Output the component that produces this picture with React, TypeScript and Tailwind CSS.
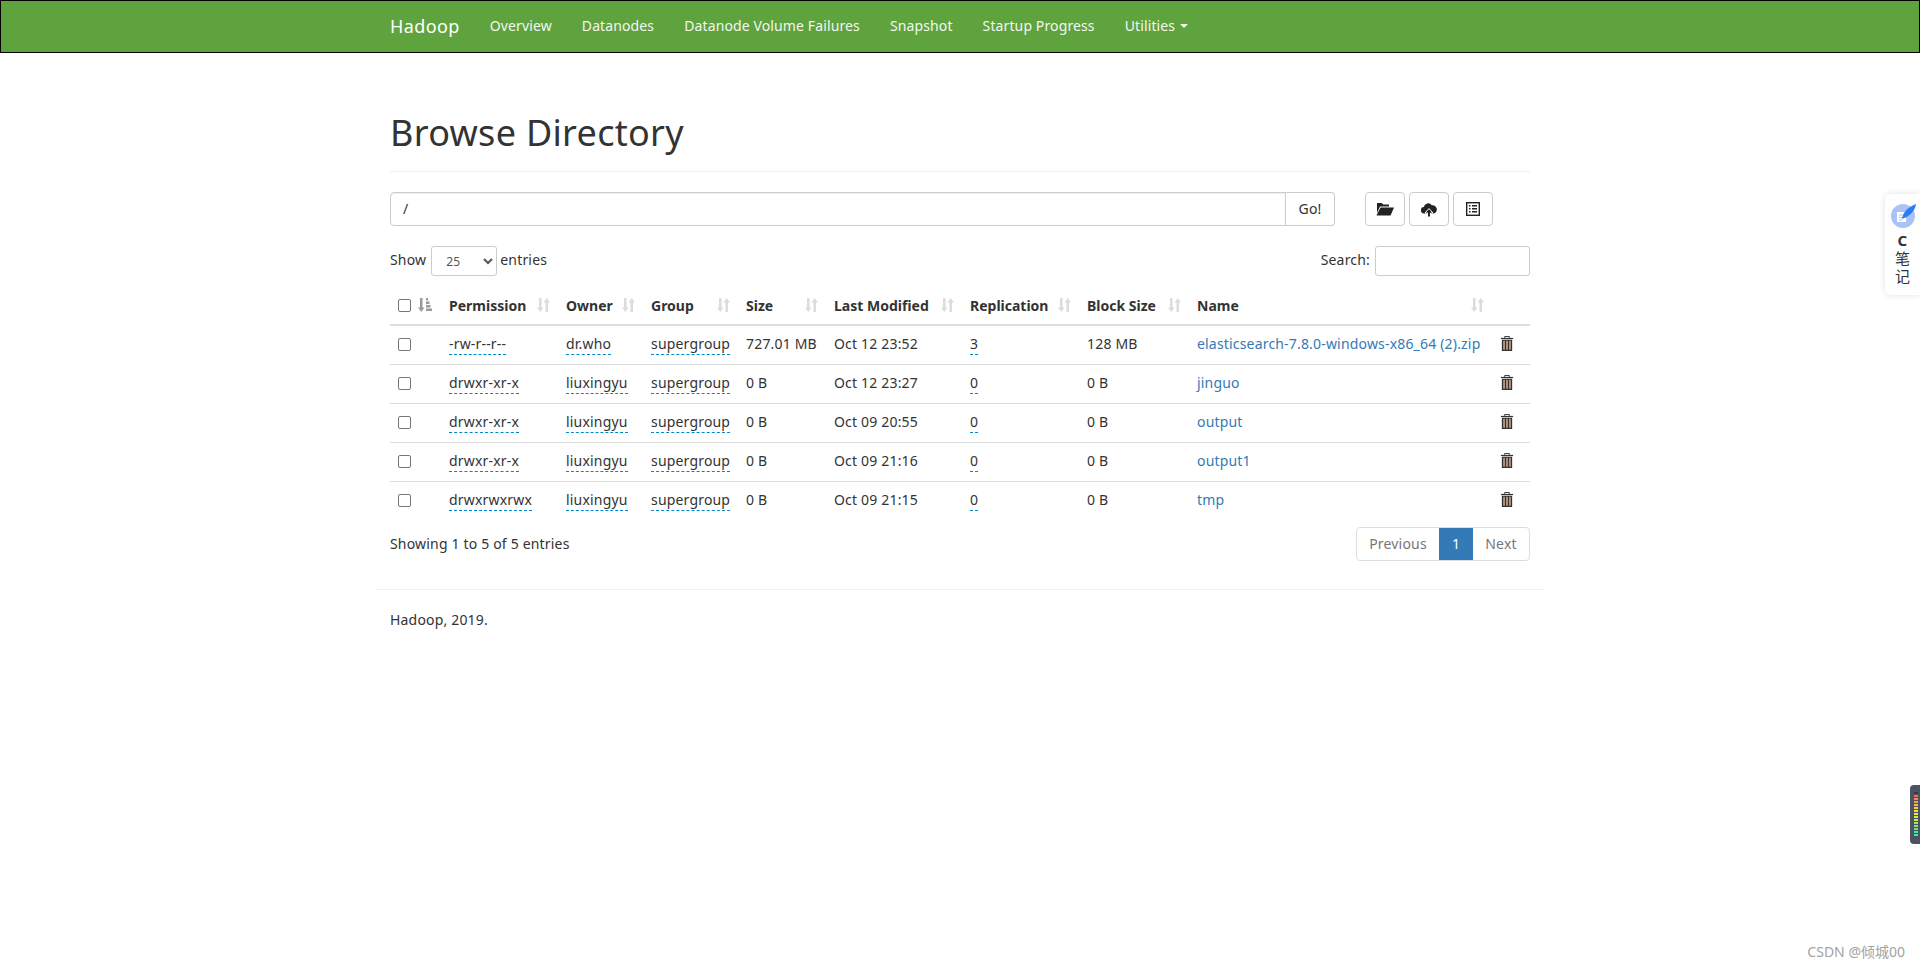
const ROWS = [
  { perm: "-rw-r--r--", owner: "dr.who", group: "supergroup", size: "727.01 MB", date: "Oct 12 23:52", rep: "3", block: "128 MB", name: "elasticsearch-7.8.0-windows-x86_64 (2).zip" },
  { perm: "drwxr-xr-x", owner: "liuxingyu", group: "supergroup", size: "0 B", date: "Oct 12 23:27", rep: "0", block: "0 B", name: "jinguo" },
  { perm: "drwxr-xr-x", owner: "liuxingyu", group: "supergroup", size: "0 B", date: "Oct 09 20:55", rep: "0", block: "0 B", name: "output" },
  { perm: "drwxr-xr-x", owner: "liuxingyu", group: "supergroup", size: "0 B", date: "Oct 09 21:16", rep: "0", block: "0 B", name: "output1" },
  { perm: "drwxrwxrwx", owner: "liuxingyu", group: "supergroup", size: "0 B", date: "Oct 09 21:15", rep: "0", block: "0 B", name: "tmp" },
];

const COLUMNS = [
  { label: "Permission", width: "w-[117px]" },
  { label: "Owner", width: "w-[85px]" },
  { label: "Group", width: "w-[95px]" },
  { label: "Size", width: "w-[88px]" },
  { label: "Last Modified", width: "w-[136px]" },
  { label: "Replication", width: "w-[117px]" },
  { label: "Block Size", width: "w-[110px]" },
  { label: "Name", width: "w-[303px]" },
];

const NAV = ["Overview", "Datanodes", "Datanode Volume Failures", "Snapshot", "Startup Progress"];

const METER = ["#3a3a3a", "#f26a6a", "#f5875c", "#f7a14e", "#f9b846", "#fbd03f", "#f7e03a", "#ece63b", "#dce840", "#c4e74e", "#a5e560", "#85e475", "#62e38e", "#48e3a8", "#3fe3bd"];

const SortIcon = () => (
  <svg viewBox="0 0 13 14" className="h-[14px] w-[13px] shrink-0 fill-[#dcdcdc]">
    <path d="M2 0h2.500v9.500H6.500L3.250 14 0 9.500H2z" />
    <path d="M8.500 14V4.500H6.500L9.750 0 13 4.500H11V14z" />
  </svg>
);

const SortActive = () => (
  <svg viewBox="0 0 14 14" className="h-[14px] w-[14px] fill-[#9a9a9a]">
    <path d="M2 0h2.500v9.500H6.500L3.250 14 0 9.500H2z" />
    <path d="M8 0h2v2.500H8zM8 3.500h3.500V6H8zM8 7h4.500v2.500H8zM8 10.500h6V13H8z" />
  </svg>
);

const TrashIcon = () => (
  <svg viewBox="0 0 14 16" className="h-[15px] w-[14px]">
    <path d="M4.500 2V.5h5V2" fill="none" stroke="#333" strokeWidth="1" />
    <path d="M.5 2h13v1.300H.5z" fill="#333" />
    <path d="M1.500 4h11v12h-11z" fill="#333" />
    <path d="M3 5h1.700v9.700H3zM6.150 5h1.700v9.700h-1.700zM9.300 5H11v9.700H9.300z" fill="#c9a68f" />
  </svg>
);

const FolderOpenIcon = () => (
  <svg viewBox="0 0 18 14" className="h-[14px] w-[18px] fill-[#222]">
    <path d="M1 1h5l1 1.500h6V4.500H4L1 11z" />
    <path d="M4.500 5.500H18L14.500 13.500H0.500z" />
  </svg>
);

const CloudUploadIcon = () => (
  <svg viewBox="0 0 16 15" className="h-[15px] w-[16px] fill-[#222]">
    <path d="M3.500 11.500A3.200 3.200 0 0 1 2.800 5 4.400 4.400 0 0 1 10.800 3.300 3.800 3.800 0 0 1 12.500 11.500z" />
    <path d="M8 6.500l4 4.500H9.500V15H6.500v-4H4z" stroke="#fff" strokeWidth="1" />
  </svg>
);

const ListAltIcon = () => (
  <svg viewBox="0 0 14 14" className="h-[14px] w-[14px]">
    <rect x="0.700" y="0.700" width="12.600" height="12.600" fill="#fff" stroke="#222" strokeWidth="1.400" />
    <path d="M3 3h1.500v1.500H3zM6 3h5v1.500H6zM3 6h1.500v1.500H3zM6 6h5v1.500H6zM3 9h1.500v1.500H3zM6 9h5v1.500H6z" fill="#222" />
  </svg>
);

const Dashed = ({ children }: { children: string }) => (
  <span className="border-b border-dashed border-[#0088cc] pb-px">{children}</span>
);

const Checkbox = () => (
  <input type="checkbox" className="m-0 block h-[13px] w-[13px] appearance-none rounded-[2px] border border-[#767676] bg-white" />
);

const IconButton = ({ children }: { children: React.ReactNode }) => (
  <button className="flex h-[34px] w-[40px] items-center justify-center rounded border border-[#ccc] bg-white">{children}</button>
);

const NoteWidget = () => (
  <div className="absolute right-0 top-[194px] flex h-[101px] w-[35px] flex-col items-center rounded-l-md bg-white pt-[10px] shadow-[0_0_6px_rgba(0,0,0,0.12)]">
    <svg viewBox="0 0 24 24" className="h-6 w-6 overflow-visible">
      <circle cx="12" cy="12" r="12" fill="#a9c3f7" />
      <path d="M6 8h9v10H6z" fill="#fff" />
      <path d="M8 11h5M8 13.500h5M8 16h3" stroke="#a9c3f7" strokeWidth="1" />
      <path d="M11 15C12 8 17 3 25 0c-1 7-6 12-14 15z" fill="#2b7bf5" />
    </svg>
    <div className="mt-[3px] text-center text-[15px] font-bold leading-[18px] text-[#333]">C</div>
    <div className="text-center text-[15px] leading-[18px] text-[#333]">笔</div>
    <div className="text-center text-[15px] leading-[18px] text-[#333]">记</div>
  </div>
);

const MeterWidget = () => (
  <div className="absolute right-0 top-[785px] flex h-[59px] w-[10px] flex-col items-end gap-px rounded-l bg-[#4d5261] pr-[2px] pt-[7px]">
    {METER.map((c, i) => (
      <div key={i} className="h-[2px] w-[4px]" style={{ backgroundColor: c }} />
    ))}
  </div>
);

export default function App() {
  return (
    <div className="relative min-h-[969px] overflow-hidden bg-white font-['Noto_Sans','Noto_Sans_CJK_SC',sans-serif] text-[14px] leading-5 tracking-[0.18px] text-[#333]">
      <nav className="h-[53px] border border-black bg-[#5fa33e]">
        <div className="mx-auto flex h-[50px] w-[1170px] items-center px-[15px] tracking-[0.12px] text-[#f2f7ef]">
          <span className="mr-[30px] text-[18px] tracking-[0.4px] text-white">Hadoop</span>
          {NAV.map((item) => (
            <span key={item} className="mr-[30px]">{item}</span>
          ))}
          <span className="flex items-center gap-[5px]">
            Utilities
            <span className="h-0 w-0 border-x-4 border-t-4 border-x-transparent border-t-[#f2f7ef]" />
          </span>
        </div>
      </nav>

      <main className="mx-auto w-[1170px] px-[15px]">
        <div className="mt-[54px] border-b border-[#eee] pb-[12px]">
          <h1 className="text-[36px] font-normal leading-[52px] tracking-[0.3px] text-[#333]">Browse Directory</h1>
        </div>

        <div className="mt-5 flex h-[34px]">
          <div className="flex w-[945px]">
            <input
              readOnly
              value="/"
              className="min-w-0 flex-1 rounded-l border border-[#ccc] px-3 shadow-[inset_0_1px_1px_rgba(0,0,0,0.075)] outline-none"
            />
            <button className="w-[49px] rounded-r border border-l-0 border-[#ccc] bg-white">Go!</button>
          </div>
          <div className="ml-[30px] flex gap-[4px]">
            <IconButton><FolderOpenIcon /></IconButton>
            <IconButton><CloudUploadIcon /></IconButton>
            <IconButton><ListAltIcon /></IconButton>
          </div>
        </div>

        <div className="mt-[20px] flex h-[30px] items-center justify-between">
          <div className="flex items-center">
            <span className="pb-[2px]">Show</span>
            <select className="ml-[5px] mr-[3px] h-[30px] w-[66px] rounded-[3px] border border-[#ccc] bg-white pl-[10px] text-[12px] text-[#555]">
              <option>25</option>
            </select>
            <span className="pb-[2px]">entries</span>
          </div>
          <div className="flex items-center gap-[5px]">
            <span className="pb-[2px]">Search:</span>
            <input className="h-[30px] w-[155px] rounded-[3px] border border-[#ccc] outline-none" />
          </div>
        </div>

        <table className="mt-[10px] w-[1140px] table-fixed border-collapse">
          <thead>
            <tr className="h-[39px] border-b-2 border-[#ddd]">
              <th className="w-[51px] px-2 text-left">
                <div className="flex items-center gap-[7px]">
                  <Checkbox />
                  <SortActive />
                </div>
              </th>
              {COLUMNS.map((col) => (
                <th key={col.label} className={`${col.width} px-2 text-left font-bold tracking-normal`}>
                  <div className="flex items-center justify-between">
                    <span className="whitespace-nowrap pt-[2px]">{col.label}</span>
                    <SortIcon />
                  </div>
                </th>
              ))}
              <th className="px-2" />
            </tr>
          </thead>
          <tbody>
            {ROWS.map((row) => (
              <tr key={row.name} className="h-[39px] border-b border-[#ddd] last:border-b-0">
                <td className="px-2"><Checkbox /></td>
                <td className="px-2 pb-[2px]"><Dashed>{row.perm}</Dashed></td>
                <td className="px-2 pb-[2px]"><Dashed>{row.owner}</Dashed></td>
                <td className="px-2 pb-[2px]"><Dashed>{row.group}</Dashed></td>
                <td className="whitespace-nowrap px-2 pb-[2px]">{row.size}</td>
                <td className="whitespace-nowrap px-2 pb-[2px]">{row.date}</td>
                <td className="px-2 pb-[2px]"><Dashed>{row.rep}</Dashed></td>
                <td className="whitespace-nowrap px-2 pb-[2px]">{row.block}</td>
                <td className="whitespace-nowrap px-2 pb-[2px] text-[#337ab7]">{row.name}</td>
                <td className="px-2 pb-[2px]"><TrashIcon /></td>
              </tr>
            ))}
          </tbody>
        </table>

        <div className="mt-[7px] flex items-start justify-between">
          <div className="pt-[7px]">Showing 1 to 5 of 5 entries</div>
          <div className="flex h-[34px] overflow-hidden rounded border border-[#ddd]">
            <span className="flex w-[82px] items-center justify-center text-[#777]">Previous</span>
            <span className="flex w-[34px] items-center justify-center bg-[#337ab7] text-white">1</span>
            <span className="flex w-[56px] items-center justify-center text-[#777]">Next</span>
          </div>
        </div>
      </main>

      <footer className="mx-auto mt-[28px] w-[1170px] border-t border-[#eee] px-[15px] pt-[20px]">Hadoop, 2019.</footer>

      <NoteWidget />
      <MeterWidget />
      <div className="absolute bottom-[8px] right-[15px] text-[14px] leading-[18px] tracking-normal text-[#a3a3a3]">
        CSDN @倾城00
      </div>
    </div>
  );
}
